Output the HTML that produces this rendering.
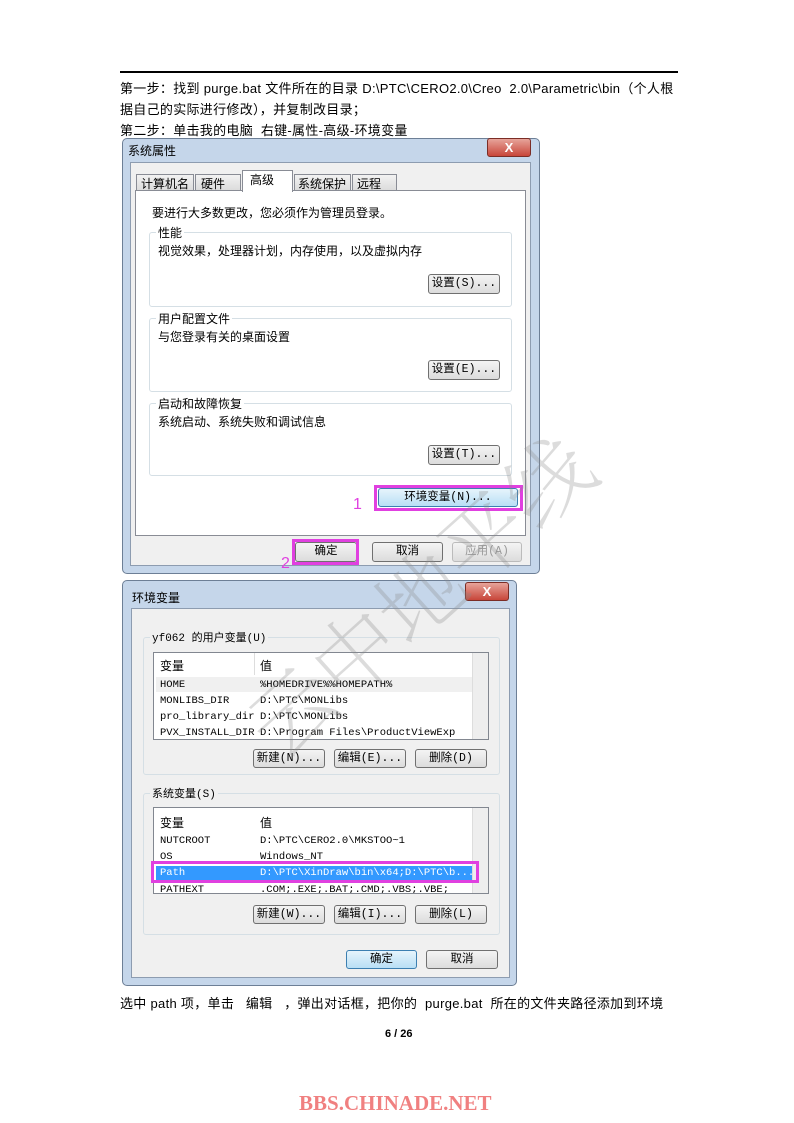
<!DOCTYPE html>
<html><head><meta charset="utf-8"><style>
*{margin:0;padding:0;box-sizing:border-box}
body{width:794px;height:1123px;background:#fff;position:relative;overflow:hidden;font-family:"Liberation Sans","Noto Sans CJK SC",sans-serif;color:#000}
.a{position:absolute;white-space:nowrap}
.t{font-size:13px}
.frame{position:absolute;background:#c5d6ea;border:1px solid #6d7f96;border-radius:5px}
.body{position:absolute;background:#f0f0f0;border:1px solid #8d9cb0}
.grp{position:absolute;border:1px solid #d5dfe5;border-radius:3px}
.lg{position:absolute;background:#fff;padding:0 2px;font-size:12px;top:-9px;left:6px}
.btn{position:absolute;border:1px solid #707070;border-radius:3px;background:linear-gradient(#f4f4f4,#dcdcdc);font-size:11.5px;text-align:center;font-family:"Liberation Mono","Noto Sans CJK SC",monospace}
.btnb{border-color:#3c7fb1;background:linear-gradient(#e6f4fc,#b9dff5)}
.mag{position:absolute;border:3px solid #e040e0}
.x{position:absolute;width:44px;height:19px;background:linear-gradient(#e7a49a,#c8463a);border:1px solid #7b2d26;border-radius:3px;color:#fff;font-weight:bold;font-size:13px;text-align:center;line-height:17px}
.list{position:absolute;background:#fff;border:1px solid #828790;font-family:"Liberation Mono","Noto Sans CJK SC",monospace;font-size:10.5px;overflow:hidden}
.row{position:absolute;left:6px;white-space:nowrap}
.sb{position:absolute;right:0;top:0;bottom:0;width:16px;background:#eee;border-left:1px solid #ddd}
</style></head><body>
<div class="a" style="left:120px;top:71px;width:558px;height:2px;background:#000"></div>
<div class="a t" style="left:120px;top:78px;letter-spacing:0.3px">第一步：找到 purge.bat 文件所在的目录 D:\PTC\CERO2.0\Creo&nbsp; 2.0\Parametric\bin（个人根</div>
<div class="a t" style="left:120px;top:99px;letter-spacing:0.3px">据自己的实际进行修改），并复制改目录；</div>
<div class="a t" style="left:120px;top:120px;letter-spacing:0.3px">第二步：单击我的电脑&nbsp; 右键-属性-高级-环境变量</div>

<!-- dialog 1 -->
<div class="frame" style="left:122px;top:138px;width:418px;height:436px"></div>
<div class="a" style="left:128px;top:142px;font-size:12px">系统属性</div>
<div class="x" style="left:487px;top:138px">X</div>
<div class="body" style="left:130px;top:162px;width:401px;height:404px"></div>
<div class="a" style="left:135px;top:190px;width:391px;height:346px;background:#fff;border:1px solid #898c95"></div>
<div class="a" style="left:136px;top:174px;width:58px;height:17px;border:1px solid #898c95;background:linear-gradient(#f2f2f2,#dcdcdc);font-size:12px;padding-left:4px">计算机名</div>
<div class="a" style="left:195px;top:174px;width:46px;height:17px;border:1px solid #898c95;background:linear-gradient(#f2f2f2,#dcdcdc);font-size:12px;padding-left:5px">硬件</div>
<div class="a" style="left:242px;top:170px;width:51px;height:22px;border:1px solid #898c95;border-bottom:none;background:#fff;font-size:12px;padding-left:7px">高级</div>
<div class="a" style="left:294px;top:174px;width:57px;height:17px;border:1px solid #898c95;background:linear-gradient(#f2f2f2,#dcdcdc);font-size:12px;padding-left:3px">系统保护</div>
<div class="a" style="left:352px;top:174px;width:45px;height:17px;border:1px solid #898c95;background:linear-gradient(#f2f2f2,#dcdcdc);font-size:12px;padding-left:4px">远程</div>
<div class="a" style="left:152px;top:204px;font-size:12px">要进行大多数更改，您必须作为管理员登录。</div>
<div class="grp" style="left:149px;top:232px;width:363px;height:75px"><span class="lg">性能</span></div>
<div class="a" style="left:158px;top:242px;font-size:12px">视觉效果，处理器计划，内存使用，以及虚拟内存</div>
<div class="btn" style="left:428px;top:274px;width:72px;height:20px;line-height:18px">设置(S)...</div>
<div class="grp" style="left:149px;top:318px;width:363px;height:74px"><span class="lg">用户配置文件</span></div>
<div class="a" style="left:158px;top:328px;font-size:12px">与您登录有关的桌面设置</div>
<div class="btn" style="left:428px;top:360px;width:72px;height:20px;line-height:18px">设置(E)...</div>
<div class="grp" style="left:149px;top:403px;width:363px;height:73px"><span class="lg">启动和故障恢复</span></div>
<div class="a" style="left:158px;top:413px;font-size:12px">系统启动、系统失败和调试信息</div>
<div class="btn" style="left:428px;top:445px;width:72px;height:20px;line-height:18px">设置(T)...</div>
<div class="btn btnb" style="left:378px;top:488px;width:140px;height:19px;line-height:17px">环境变量(N)...</div>
<div class="mag" style="left:374px;top:485px;width:149px;height:26px"></div>
<div class="a" style="left:353px;top:496px;color:#e040e0;font-size:16px">1</div>
<div class="btn" style="left:295px;top:542px;width:62px;height:20px;line-height:18px">确定</div>
<div class="mag" style="left:292px;top:539px;width:67px;height:26px"></div>
<div class="a" style="left:281px;top:555px;color:#e040e0;font-size:16px">2</div>
<div class="btn" style="left:372px;top:542px;width:71px;height:20px;line-height:18px">取消</div>
<div class="btn" style="left:452px;top:542px;width:70px;height:20px;line-height:18px;color:#999;border-color:#bbb">应用(A)</div>

<!-- dialog 2 -->
<div class="frame" style="left:122px;top:580px;width:395px;height:406px"></div>
<div class="a" style="left:132px;top:589px;font-size:12px">环境变量</div>
<div class="x" style="left:465px;top:582px">X</div>
<div class="body" style="left:131px;top:608px;width:379px;height:370px"></div>
<div class="grp" style="left:143px;top:637px;width:357px;height:138px;border-color:#d5dfe5"><span class="lg" style="background:#f0f0f0;font-family:'Liberation Mono','Noto Sans CJK SC',monospace;font-size:11px">yf062 的用户变量(U)</span></div>
<div class="list" style="left:153px;top:652px;width:336px;height:88px">
<div class="row" style="top:4px;font-family:'Liberation Sans','Noto Sans CJK SC',sans-serif;font-size:12px">变量</div>
<div class="row" style="left:106px;top:4px;font-family:'Liberation Sans','Noto Sans CJK SC',sans-serif;font-size:12px">值</div>
<div class="a" style="left:100px;top:0;height:22px;width:1px;background:#ddd"></div>
<div class="a" style="left:2px;top:24px;width:316px;height:15px;background:#f0f0f0"></div>
<div class="row" style="top:26px">HOME</div><div class="row" style="left:106px;top:26px">%HOMEDRIVE%%HOMEPATH%</div>
<div class="row" style="top:42px">MONLIBS_DIR</div><div class="row" style="left:106px;top:42px">D:\PTC\MONLibs</div>
<div class="row" style="top:58px">pro_library_dir</div><div class="row" style="left:106px;top:58px">D:\PTC\MONLibs</div>
<div class="row" style="top:74px">PVX_INSTALL_DIR</div><div class="row" style="left:106px;top:74px">D:\Program Files\ProductViewExp</div>
<div class="sb"></div></div>
<div class="btn" style="left:253px;top:749px;width:72px;height:19px;line-height:17px">新建(N)...</div>
<div class="btn" style="left:334px;top:749px;width:72px;height:19px;line-height:17px">编辑(E)...</div>
<div class="btn" style="left:415px;top:749px;width:72px;height:19px;line-height:17px">删除(D)</div>
<div class="grp" style="left:143px;top:793px;width:357px;height:142px"><span class="lg" style="background:#f0f0f0;font-family:'Liberation Mono','Noto Sans CJK SC',monospace;font-size:11px">系统变量(S)</span></div>
<div class="list" style="left:153px;top:807px;width:336px;height:87px">
<div class="row" style="top:6px;font-family:'Liberation Sans','Noto Sans CJK SC',sans-serif;font-size:12px">变量</div>
<div class="row" style="left:106px;top:6px;font-family:'Liberation Sans','Noto Sans CJK SC',sans-serif;font-size:12px">值</div>
<div class="row" style="top:27px">NUTCROOT</div><div class="row" style="left:106px;top:27px">D:\PTC\CERO2.0\MKSTOO~1</div>
<div class="row" style="top:43px">OS</div><div class="row" style="left:106px;top:43px">Windows_NT</div>
<div class="a" style="left:2px;top:58px;width:316px;height:16px;background:#3399ff"></div>
<div class="row" style="top:59px;color:#fff">Path</div><div class="row" style="left:106px;top:59px;color:#fff">D:\PTC\XinDraw\bin\x64;D:\PTC\b...</div>
<div class="row" style="top:76px">PATHEXT</div><div class="row" style="left:106px;top:76px">.COM;.EXE;.BAT;.CMD;.VBS;.VBE;</div>
<div class="sb"></div></div>
<div class="mag" style="left:151px;top:861px;width:328px;height:22px"></div>
<div class="btn" style="left:253px;top:905px;width:72px;height:19px;line-height:17px">新建(W)...</div>
<div class="btn" style="left:334px;top:905px;width:72px;height:19px;line-height:17px">编辑(I)...</div>
<div class="btn" style="left:415px;top:905px;width:72px;height:19px;line-height:17px">删除(L)</div>
<div class="btn btnb" style="left:346px;top:950px;width:71px;height:19px;line-height:17px">确定</div>
<div class="btn" style="left:426px;top:950px;width:72px;height:19px;line-height:17px">取消</div>

<!-- watermark -->
<div class="a" style="left:215px;top:690px;font-size:86px;color:rgba(140,140,140,0.3);transform:rotate(-42deg);transform-origin:left top;font-family:'Noto Serif CJK SC',serif;font-weight:200">云中地平线</div>

<div class="a t" style="left:120px;top:993px;letter-spacing:0.3px">选中 path 项，单击&nbsp;&nbsp; 编辑&nbsp;&nbsp; ，弹出对话框，把你的&nbsp; purge.bat&nbsp; 所在的文件夹路径添加到环境</div>
<div class="a" style="left:385px;top:1028px;font-size:11px;font-weight:bold">6 / 26</div>
<div class="a" style="left:299px;top:1091px;font-size:21px;font-weight:bold;color:#f08080;font-family:'Liberation Serif',serif">BBS.CHINADE.NET</div>
</body></html>
